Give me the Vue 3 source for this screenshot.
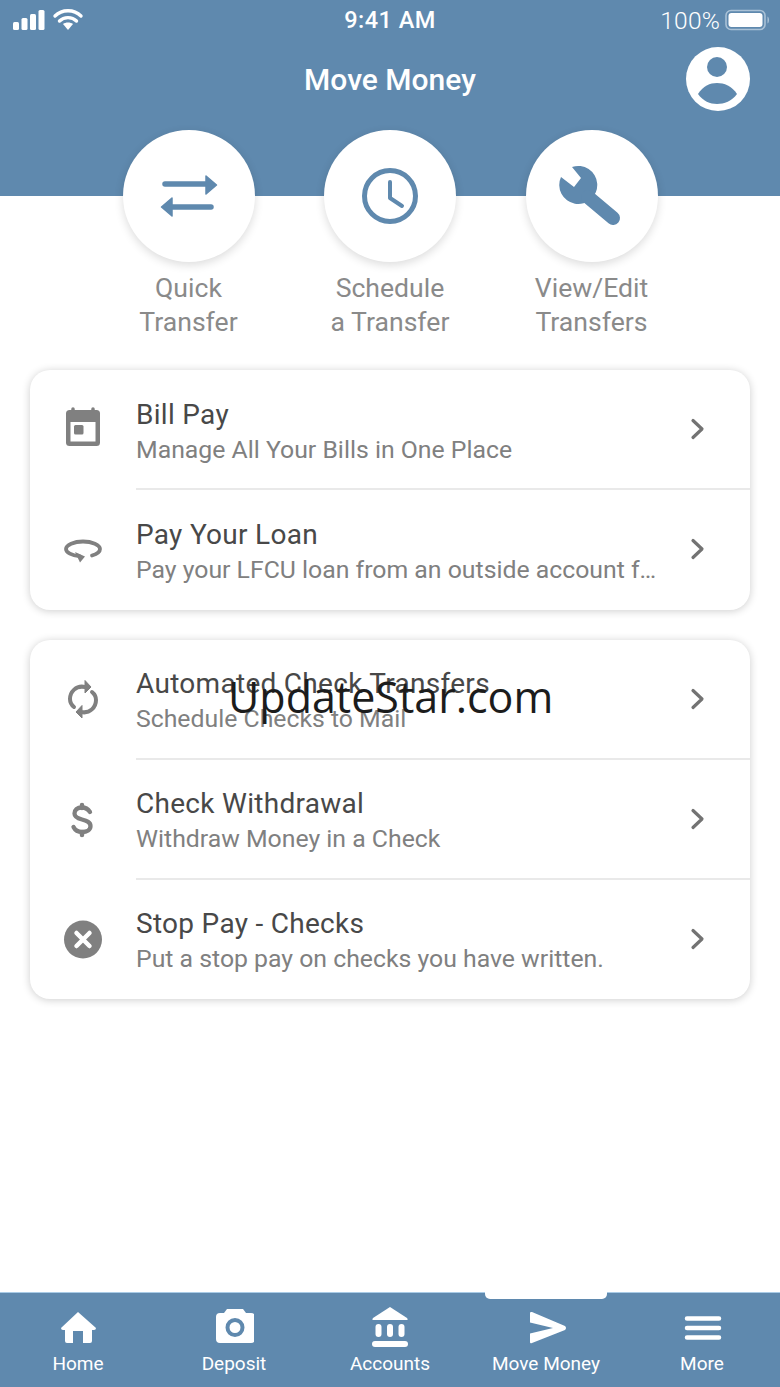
<script setup>
const actions = [
  { id: 'quick', lines: ['Quick', 'Transfer'] },
  { id: 'schedule', lines: ['Schedule', 'a Transfer'] },
  { id: 'edit', lines: ['View/Edit', 'Transfers'] },
]
const cardOne = [
  { id: 'bill', title: 'Bill Pay', sub: 'Manage All Your Bills in One Place' },
  { id: 'loan', title: 'Pay Your Loan', sub: 'Pay your LFCU loan from an outside account for payment' },
]
const cardTwo = [
  { id: 'auto', title: 'Automated Check Transfers', sub: 'Schedule Checks to Mail' },
  { id: 'check', title: 'Check Withdrawal', sub: 'Withdraw Money in a Check' },
  { id: 'stop', title: 'Stop Pay - Checks', sub: 'Put a stop pay on checks you have written.' },
]
const cards = [cardOne, cardTwo]
const tabs = [
  { id: 'home', label: 'Home' },
  { id: 'deposit', label: 'Deposit' },
  { id: 'accounts', label: 'Accounts' },
  { id: 'move', label: 'Move Money', active: true },
  { id: 'more', label: 'More' },
]
</script>

<template>
  <div class="page">
    <header class="header">
      <div class="status">
        <div class="status-left">
          <svg width="72" height="30" viewBox="12 4 72 30">
            <rect x="13" y="21" width="6" height="8" rx="1.5" fill="#fff" />
            <rect x="21.5" y="17" width="6" height="12" rx="1.5" fill="#fff" />
            <rect x="30" y="13" width="6" height="16" rx="1.5" fill="#fff" />
            <rect x="38.5" y="9" width="6" height="20" rx="1.5" fill="#fff" />
            <path d="M55 15 C62 8 74 8 81 15" fill="none" stroke="#fff" stroke-width="3.4" stroke-linecap="round" />
            <path d="M59.5 20 C64 15.5 72 15.5 76.5 20" fill="none" stroke="#fff" stroke-width="3.4" stroke-linecap="round" />
            <path d="M63 23 C65.500 21 70.500 21 73 23 L68 29 Z" fill="#fff" />
          </svg>
        </div>
        <div class="status-time">9:41 AM</div>
        <div class="status-right">
          <span class="pct">100%</span>
          <svg width="46" height="22" viewBox="725 8.500 46 22">
            <rect x="726" y="10" width="39" height="19" rx="5" fill="none" stroke="#a9c1d6" stroke-width="1.600" />
            <rect x="728.500" y="12.500" width="34" height="14" rx="3" fill="#fff" />
            <path d="M767.500 16 C769.500 17 769.500 22 767.500 23 Z" fill="#a9c1d6" />
          </svg>
        </div>
      </div>
      <div class="titlebar">
        <h1 class="title">Move Money</h1>
        <div class="avatar">
          <svg width="64" height="64" viewBox="686 47 64 64">
            <circle cx="717" cy="67" r="10" fill="#5f89ae" />
            <path d="M698 94 C703 86 710 83 717 83 C724 83 732 86 737 94 C732 101 724 104 717 104 C710 104 703 101 698 94 Z" fill="#5f89ae" />
          </svg>
        </div>
      </div>
    </header>

    <section class="actions">
      <div v-for="a in actions" :key="a.id" class="action">
        <div class="circle">
          <svg v-if="a.id === 'quick'" width="70" height="70" viewBox="154 161 70 70">
            <path d="M165 184 H208" stroke="#5f89ae" stroke-width="5.500" stroke-linecap="round" fill="none" />
            <path d="M206 176 L216.500 185 L206 194 Z" fill="#5f89ae" stroke="#5f89ae" stroke-width="1.500" stroke-linejoin="round" />
            <path d="M170 207 H211" stroke="#5f89ae" stroke-width="5.500" stroke-linecap="round" fill="none" />
            <path d="M172 198 L161.500 207 L172 216 Z" fill="#5f89ae" stroke="#5f89ae" stroke-width="1.500" stroke-linejoin="round" />
          </svg>
          <svg v-else-if="a.id === 'schedule'" width="70" height="70" viewBox="355 161 70 70">
            <circle cx="390" cy="196" r="25.500" fill="none" stroke="#5f89ae" stroke-width="5" />
            <path d="M390 182 V198 L402 206" fill="none" stroke="#5f89ae" stroke-width="4" stroke-linecap="round" stroke-linejoin="round" />
          </svg>
          <svg v-else width="70" height="70" viewBox="557 161 70 70">
            <path d="M572 167 L581 178 L574 187 L561 177 A19 19 0 1 0 572 167 Z" fill="#5f89ae" />
            <path d="M588 197 L613 218" stroke="#5f89ae" stroke-width="14" stroke-linecap="round" fill="none" />
          </svg>
        </div>
        <div class="action-label">
          <div v-for="l in a.lines" :key="l">{{ l }}</div>
        </div>
      </div>
    </section>

    <section v-for="(card, ci) in cards" :key="ci" class="card">
      <div v-for="r in card" :key="r.id" class="row">
        <div class="row-icon">
          <svg width="48" height="48" viewBox="0 0 48 48">
            <g v-if="r.id === 'bill'" transform="translate(-59 -405)">
              <path d="M73 411 V409 M93 411 V409" stroke="#808080" stroke-width="3.500" stroke-linecap="round" />
              <rect x="66" y="410" width="34" height="36" rx="3.500" fill="#808080" />
              <rect x="70.500" y="422" width="25" height="19.500" fill="#fff" />
              <rect x="74" y="425" width="9.500" height="9.500" rx="1.500" fill="#808080" />
            </g>
            <g v-else-if="r.id === 'loan'" transform="translate(-59 -525)">
              <path d="M92 555.500 C97 554 100 551.500 100 549 C100 545 92 541.500 83 541.500 C74 541.500 66 545 66 549 C66 552.500 72 555.500 79 556" fill="none" stroke="#808080" stroke-width="3.800" stroke-linecap="round" />
              <path d="M75 552 L85 556.500 L80 562.500 Z" fill="#808080" />
            </g>
            <g v-else-if="r.id === 'auto'" transform="translate(-59 -675)">
              <path d="M85 687 C76 685 70 692 70 699 C70 702 71.500 705 74 707" fill="none" stroke="#808080" stroke-width="4" stroke-linecap="round" />
              <path d="M85 680.500 L91 687 L85 693 Z" fill="#808080" stroke="#808080" stroke-width="1" stroke-linejoin="round" />
              <path d="M81 712 C90 714 96 707 96 700 C96 697 94.500 694 92 692" fill="none" stroke="#808080" stroke-width="4" stroke-linecap="round" />
              <path d="M82 705.500 L76 712 L82 718 Z" fill="#808080" stroke="#808080" stroke-width="1" stroke-linejoin="round" />
            </g>
            <g v-else-if="r.id === 'check'" transform="translate(-59 -795)">
              <path d="M90 812 C88 809 85 807.500 82 807.500 C77 807.500 74.500 810 74.500 813.500 C74.500 817 78 818.500 82 819.500 C87 820.800 90.500 822 90.500 826 C90.500 830 87 832 82 832 C78 832 75 830 73.500 827" fill="none" stroke="#808080" stroke-width="4.300" stroke-linecap="round" />
              <path d="M82 805 V808 M82 832 V835" stroke="#808080" stroke-width="4.500" stroke-linecap="round" />
            </g>
            <g v-else transform="translate(-59 -915)">
              <circle cx="83" cy="939.500" r="19" fill="#808080" />
              <path d="M76.500 933 L89.500 946 M89.500 933 L76.500 946" stroke="#fff" stroke-width="4.500" stroke-linecap="round" />
            </g>
          </svg>
        </div>
        <div class="row-text">
          <div class="row-title">{{ r.title }}</div>
          <div class="row-sub">{{ r.sub }}</div>
        </div>
        <svg class="chevron" width="16" height="24" viewBox="0 0 16 24">
          <path d="M3 3.500 L12 12 L3 20.500" fill="none" stroke="#737373" stroke-width="3.200" stroke-linecap="round" stroke-linejoin="round" />
        </svg>
      </div>
    </section>

    <nav class="tabbar">
      <div v-for="t in tabs" :key="t.id" class="tab">
        <span v-if="t.active" class="indicator"></span>
        <svg width="40" height="40" viewBox="0 0 40 40">
          <g v-if="t.id === 'home'" transform="translate(-58 -1307)" fill="#fff">
            <path d="M78 1312 L96 1328 Q96 1330 94 1330 H92 V1341 Q92 1343 90 1343 H83 V1331 H73 V1343 H67 Q65 1343 65 1341 V1330 H63 Q61 1330 61 1328 Z" />
          </g>
          <g v-else-if="t.id === 'deposit'" transform="translate(-214 -1307)">
            <path d="M227 1309 H243 L246 1313 H251 Q255 1313 255 1317 V1339 Q255 1343 251 1343 H220 Q216 1343 216 1339 V1317 Q216 1313 220 1313 H224 Z" fill="#fff" />
            <circle cx="235" cy="1327.500" r="7.500" fill="none" stroke="#5f89ae" stroke-width="4" />
          </g>
          <g v-else-if="t.id === 'accounts'" transform="translate(-371 -1307)" fill="#fff">
            <path d="M391 1307 L408 1318 Q409.500 1320 407.500 1320 H374.500 Q372.500 1320 374 1318 Z" />
            <rect x="376.500" y="1324" width="6" height="13" rx="3" />
            <rect x="388" y="1324" width="6" height="13" rx="3" />
            <rect x="399.500" y="1324" width="6" height="13" rx="3" />
            <rect x="373" y="1341" width="36" height="6" rx="3" />
          </g>
          <g v-else-if="t.id === 'move'" transform="translate(-526 -1307)" fill="#fff">
            <path d="M532 1312 L565 1326 Q567 1328 565 1330 L532 1343 Q530 1344 530 1342 V1333.500 L553 1328 L530 1322.500 V1313 Q530 1311.500 532 1312 Z" />
          </g>
          <g v-else transform="translate(-682 -1307)" stroke="#fff" stroke-width="4.500" stroke-linecap="round">
            <path d="M687 1318.500 H719 M687 1328 H719 M687 1337.500 H719" fill="none" />
          </g>
        </svg>
        <span class="tab-label">{{ t.label }}</span>
      </div>
    </nav>

    <div class="watermark">UpdateStar.com</div>
  </div>
</template>

<style>
html, body { margin: 0; padding: 0; background: #fff; }
</style>

<style scoped>
.page {
  position: relative;
  width: 780px;
  height: 1387px;
  overflow: hidden;
  display: flex;
  flex-direction: column;
  background: #fff;
  font-family: Roboto, "Liberation Sans", sans-serif;
}
.header {
  height: 196px;
  flex: none;
  background: #5f89ae;
  color: #fff;
}
.status {
  height: 40px;
  display: grid;
  grid-template-columns: 1fr auto 1fr;
  align-items: center;
  padding: 0 9px 0 12px;
}
.status-left { display: flex; align-items: center; }
.status-time { font-size: 23.5px; font-weight: 500; letter-spacing: 0.5px; margin-left: -3px; }
.status-right { display: flex; justify-content: flex-end; align-items: center; gap: 5px; }
.pct { font-size: 24.5px; font-weight: 300; letter-spacing: 0.2px; }
.titlebar {
  height: 78px;
  display: flex;
  align-items: center;
  justify-content: center;
  position: relative;
}
.title { margin: 2px 0 0; font-size: 30px; font-weight: 500; line-height: 34px; }
.avatar {
  position: absolute;
  right: 30px;
  top: 7px;
  width: 64px;
  height: 64px;
  border-radius: 50%;
  background: #fff;
}
.avatar svg { display: block; }
.actions {
  margin-top: -66px;
  display: flex;
  justify-content: center;
  flex: none;
  height: 240px;
}
.action { width: 201.5px; display: flex; flex-direction: column; align-items: center; }
.circle {
  width: 132px;
  height: 132px;
  border-radius: 50%;
  background: #fff;
  box-shadow: 0 3px 10px rgba(0, 0, 0, 0.14);
  display: flex;
  align-items: center;
  justify-content: center;
}
.action-label {
  margin-top: 9px;
  font-size: 26.6px;
  line-height: 34px;
  color: #8a8a8a;
  text-align: center;
}
.card {
  margin: 0 30px 30px;
  flex: none;
  background: #fff;
  border-radius: 20px;
  box-shadow: 0 1px 9px rgba(0, 0, 0, 0.2);
  overflow: hidden;
  height: 239.5px;
}
.card + .card { height: 359.5px; }
.row {
  height: 120px;
  display: flex;
  align-items: center;
  position: relative;
  box-sizing: border-box;
  padding-bottom: 2px;
}
.row + .row::before {
  content: "";
  position: absolute;
  left: 106px;
  right: 0;
  top: -2px;
  height: 2px;
  background: #e9e9e9;
}
.row-icon {
  width: 106px;
  flex: none;
  display: flex;
  justify-content: center;
}
.row-icon svg { display: block; }
.row-text { width: 524px; flex: none; margin-top: 6px; }
.row-title {
  font-size: 28px;
  line-height: 34px;
  letter-spacing: 0.29px;
  color: #484848;
  white-space: nowrap;
}
.row-sub {
  font-size: 24.8px;
  line-height: 35px;
  color: #808080;
  white-space: nowrap;
  overflow: hidden;
  text-overflow: ellipsis;
}
.chevron { margin-left: 30px; flex: none; }
.tabbar {
  margin-top: auto;
  height: 95px;
  flex: none;
  background: #5f89ae;
  border-top: 1px solid #a9cbe6;
  box-sizing: border-box;
  display: flex;
}
.tab {
  position: relative;
  flex: 1;
  display: flex;
  flex-direction: column;
  align-items: center;
  padding-top: 14px;
  color: #fff;
}
.tab svg { display: block; }
.tab-label { font-size: 19px; line-height: 24px; margin-top: 5px; }
.indicator {
  position: absolute;
  top: -1px;
  left: 17px;
  width: 122px;
  height: 7px;
  background: #fff;
  border-radius: 0 0 5px 5px;
}
.watermark {
  position: absolute;
  left: 228px;
  top: 667px;
  font-family: "Open Sans", "Noto Sans", sans-serif;
  font-size: 43px;
  line-height: 60px;
  color: #1c1c1c;
  white-space: nowrap;
}
</style>
